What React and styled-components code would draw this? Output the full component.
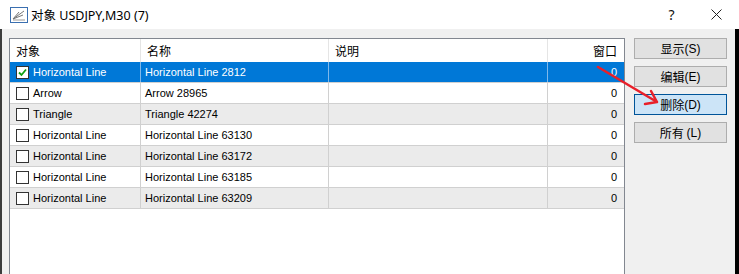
import React from 'react';
import styled, { createGlobalStyle } from 'styled-components';

const GlobalStyle = createGlobalStyle`
  html, body {
    margin: 0;
    padding: 0;
    background: #000;
    overflow: hidden;
  }
  body {
    font-family: "Liberation Sans", "Noto Sans CJK SC", sans-serif;
  }
`;

const Window = styled.div`
  position: relative;
  width: 739px;
  height: 274px;
  display: flex;
  flex-direction: column;
  overflow: hidden;
`;

const TitleBar = styled.div`
  height: 29px;
  background: #fff;
  display: flex;
  align-items: center;
  padding-left: 10px;
  flex-shrink: 0;
`;

const TitleText = styled.div`
  margin-left: 3px;
  font-family: "Noto Sans", "Noto Sans CJK SC", sans-serif;
  font-size: 12.5px;
  color: #000;
  flex: 1;
  padding-bottom: 1px;
`;

const TitleButton = styled.div`
  width: 45px;
  display: flex;
  justify-content: center;
  align-items: center;
  font-family: "Noto Sans", sans-serif;
  font-size: 14px;
  color: #111;
`;

const Body = styled.div`
  flex: 1;
  display: flex;
  min-height: 0;
`;

const LeftEdge = styled.div`
  width: 2px;
  background: #3c3c3c;
`;

const RightEdge = styled.div`
  width: 4px;
  background: #000;
`;

const Client = styled.div`
  flex: 1;
  background: #f0f0f0;
  display: flex;
  align-items: flex-start;
  padding: 9px 0 0 7px;
  gap: 9px;
`;

const ListBox = styled.div`
  width: 614px;
  height: 260px;
  border: 1px solid #828790;
  background: #fff;
  flex-shrink: 0;
`;

const cols = '130px 188px 219px 77px';

const HeaderRow = styled.div`
  display: grid;
  grid-template-columns: ${cols};
  height: 23px;
`;

const HeaderCell = styled.div`
  display: flex;
  align-items: center;
  justify-content: ${p => (p.$right ? 'flex-end' : 'flex-start')};
  padding: 0 ${p => (p.$right ? '7px' : '0')} 0 6px;
  border-left: ${p => (p.$first ? 'none' : '1px solid #e5e5e5')};
  font-family: "Noto Sans CJK SC", sans-serif;
  font-size: 12px;
  color: #000;
`;

const Row = styled.div`
  display: grid;
  grid-template-columns: ${cols};
  height: 20px;
  border-bottom: 1px solid #d0d0d0;
  background: ${p => (p.$selected ? '#0078d7' : p.$alt ? '#ebebeb' : '#fff')};
  color: ${p => (p.$selected ? '#fff' : '#000')};
`;

const Cell = styled.div`
  display: flex;
  align-items: center;
  justify-content: ${p => (p.$right ? 'flex-end' : 'flex-start')};
  padding: 0 ${p => (p.$right ? '7px' : '0')} 0 ${p => p.$pl || '4px'};
  border-left: ${p => (p.$first ? 'none' : `1px solid ${p.$selected ? '#7fb8ea' : '#d0d0d0'}`)};
  font-size: 11px;
  white-space: nowrap;
`;

const Check = styled.span`
  width: 11px;
  height: 11px;
  border: 1px solid #333;
  background: #fff;
  margin-right: 4px;
  display: inline-flex;
  align-items: center;
  justify-content: center;
  flex-shrink: 0;
`;

const Buttons = styled.div`
  display: flex;
  flex-direction: column;
  gap: 7px;
`;

const Button = styled.div`
  width: 91px;
  height: 19px;
  border: 1px solid ${p => (p.$active ? '#005499' : '#adadad')};
  background: ${p => (p.$active ? '#cce4f7' : '#e1e1e1')};
  display: flex;
  align-items: center;
  justify-content: center;
  font-family: "Noto Sans CJK SC", sans-serif;
  font-size: 12px;
  color: #000;
  white-space: pre;
`;

const Key = styled.span`
  font-family: "Liberation Sans", sans-serif;
  font-size: 12px;
`;

const Arrow = styled.svg`
  position: absolute;
  left: 0;
  top: 0;
  pointer-events: none;
`;

const rows = [
  ['Horizontal Line', 'Horizontal Line 2812'],
  ['Arrow', 'Arrow 28965'],
  ['Triangle', 'Triangle 42274'],
  ['Horizontal Line', 'Horizontal Line 63130'],
  ['Horizontal Line', 'Horizontal Line 63172'],
  ['Horizontal Line', 'Horizontal Line 63185'],
  ['Horizontal Line', 'Horizontal Line 63209'],
];

const buttons = [
  ['显示', '(S)'],
  ['编辑', '(E)'],
  ['删除', '(D)'],
  ['所有\u00a0', '(L)'],
];

const App = () => (
  <>
    <GlobalStyle />
    <Window>
      <TitleBar>
        <svg width="18" height="16" viewBox="0 0 18 16">
          <rect x="0.5" y="0.5" width="17" height="15" fill="#fff" stroke="#3a6fb0" />
          <path d="M3 12 L14 4 M3 12 L13 8 M3 12 L9 5" stroke="#777" strokeWidth="1" fill="none" />
          <path d="M3 13 H15" stroke="#999" strokeWidth="1" />
        </svg>
        <TitleText>对象 USDJPY,M30 (7)</TitleText>
        <TitleButton>?</TitleButton>
        <TitleButton>
          <svg width="11" height="11" viewBox="0 0 11 11">
            <path d="M0.5 0.5 L10.5 10.5 M10.5 0.5 L0.5 10.5" stroke="#222" strokeWidth="1" />
          </svg>
        </TitleButton>
      </TitleBar>
      <Body>
        <LeftEdge />
        <Client>
          <ListBox>
            <HeaderRow>
              <HeaderCell $first>对象</HeaderCell>
              <HeaderCell>名称</HeaderCell>
              <HeaderCell>说明</HeaderCell>
              <HeaderCell $right>窗口</HeaderCell>
            </HeaderRow>
            {rows.map(([type, name], i) => (
              <Row key={i} $selected={i === 0} $alt={i % 2 === 0}>
                <Cell $first $pl="6px">
                  <Check>
                    {i === 0 && (
                      <svg width="9" height="9" viewBox="0 0 9 9">
                        <path d="M1 4.5 L3.5 7 L8 1.5" stroke="#10a010" strokeWidth="1.8" fill="none" />
                      </svg>
                    )}
                  </Check>
                  {type}
                </Cell>
                <Cell $selected={i === 0}>{name}</Cell>
                <Cell $selected={i === 0} />
                <Cell $selected={i === 0} $right>0</Cell>
              </Row>
            ))}
          </ListBox>
          <Buttons>
            {buttons.map(([label, key], i) => (
              <Button key={i} $active={i === 2}>
                {label}
                <Key>{key}</Key>
              </Button>
            ))}
          </Buttons>
        </Client>
        <RightEdge />
      </Body>
      <Arrow width="739" height="274" viewBox="0 0 739 274">
        <path
          d="M598 67 L657 102 M657 102 L651 91 M657 102 L645 104"
          stroke="#e8202a"
          strokeWidth="2.5"
          strokeLinecap="round"
          fill="none"
        />
      </Arrow>
    </Window>
  </>
);

export default App;
